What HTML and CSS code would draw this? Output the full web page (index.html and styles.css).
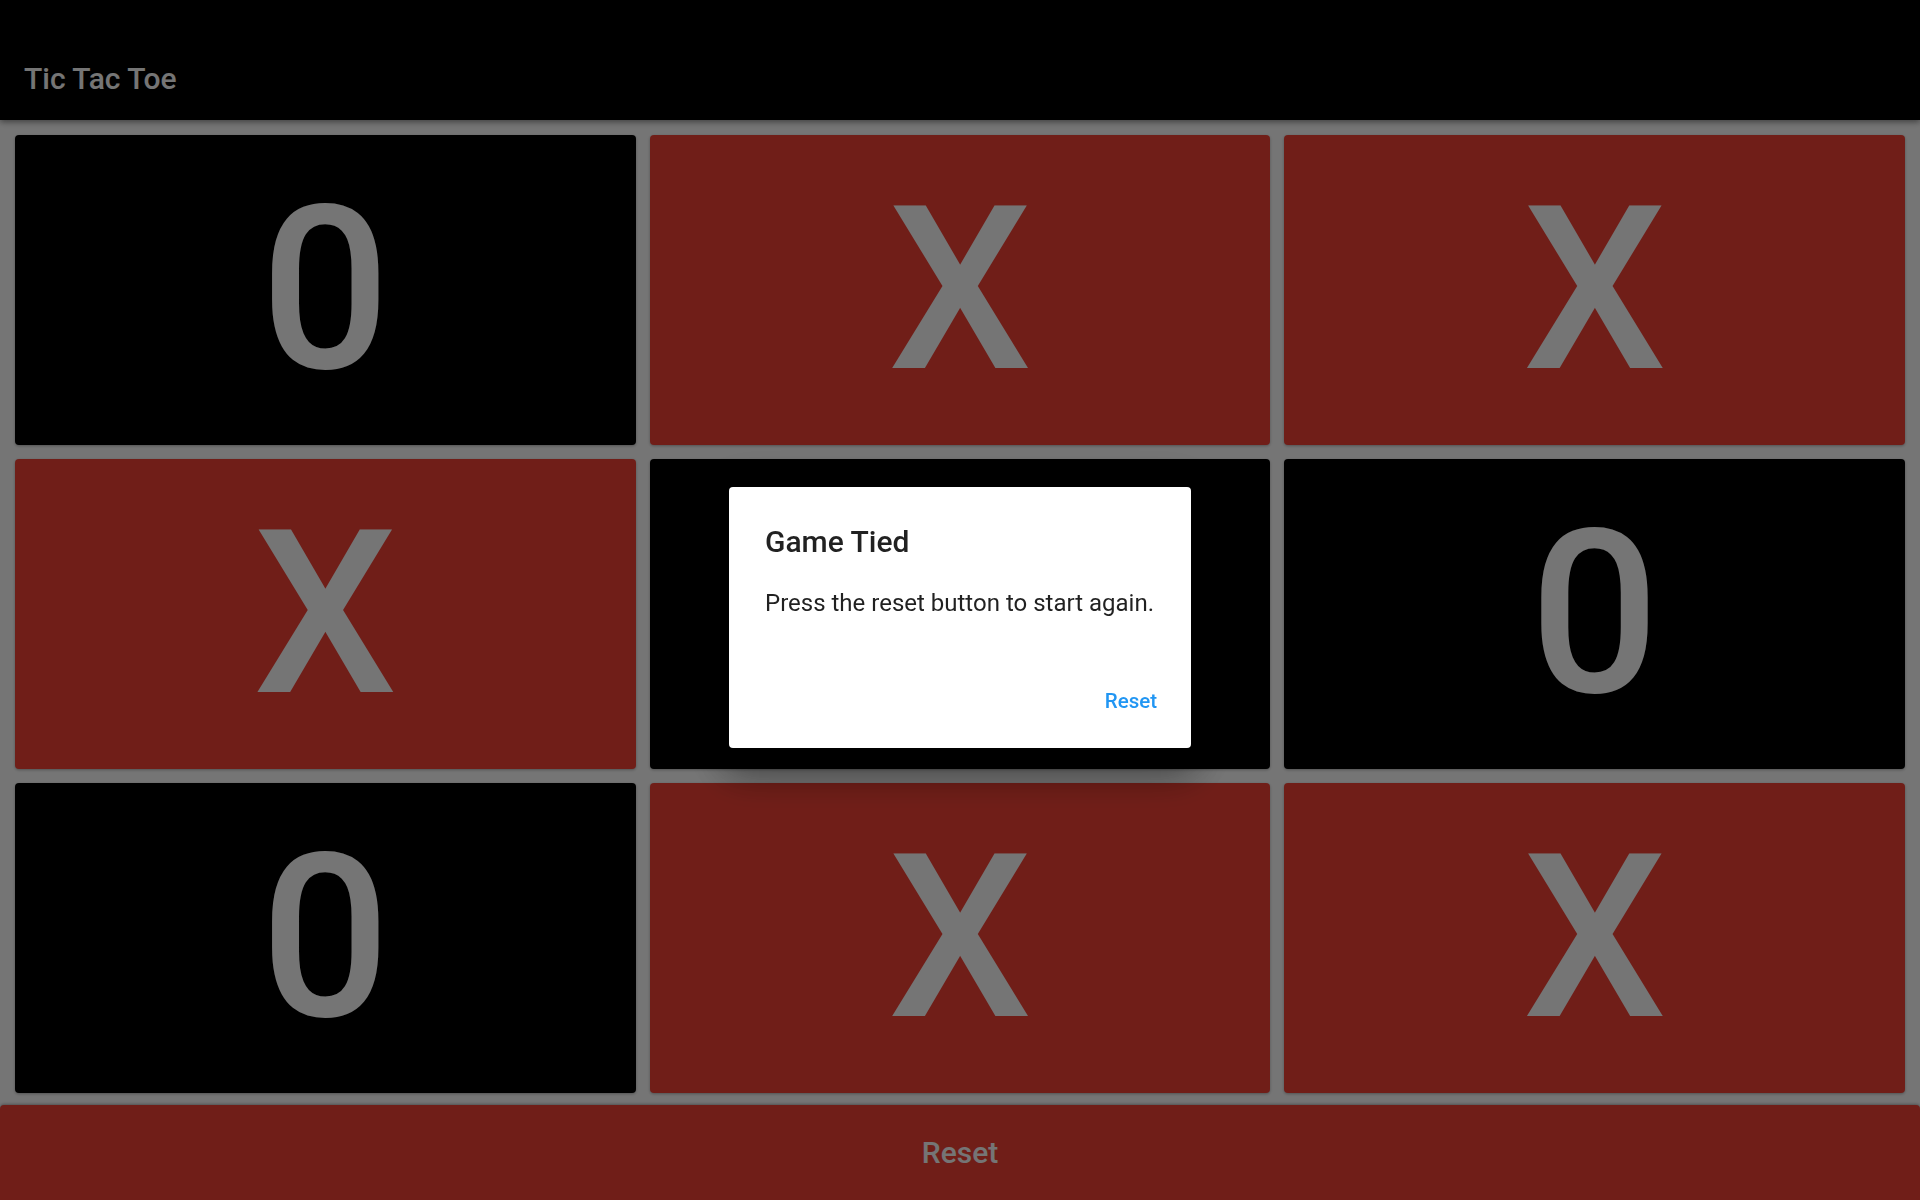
FILE: index.html
```html
<!DOCTYPE html>
<html lang="en">
<head>
<meta charset="utf-8">
<title>Tic Tac Toe</title>
<link rel="stylesheet" href="styles.css">
</head>
<body>
<div class="app">
  <header class="app-bar">
    <h1 class="app-title">Tic Tac Toe</h1>
  </header>
  <main class="board">
    <div class="cell cell-o">0</div>
    <div class="cell cell-x">X</div>
    <div class="cell cell-x">X</div>
    <div class="cell cell-x">X</div>
    <div class="cell cell-o"></div>
    <div class="cell cell-o">0</div>
    <div class="cell cell-o">0</div>
    <div class="cell cell-x">X</div>
    <div class="cell cell-x">X</div>
  </main>
  <button class="reset-bar">Reset</button>
</div>
<div class="barrier">
  <div class="dialog" role="dialog">
    <h2 class="dialog-title">Game Tied</h2>
    <p class="dialog-content">Press the reset button to start again.</p>
    <div class="dialog-actions">
      <button class="text-button">Reset</button>
    </div>
  </div>
</div>
</body>
</html>
```
FILE: styles.css
```css
* { box-sizing: border-box; }
html, body {
  margin: 0;
  padding: 0;
  height: 100%;
}
body {
  font-family: Roboto, "Noto Sans", "Liberation Sans", sans-serif;
  background: #ffffff;
  overflow: hidden;
}
.app {
  display: flex;
  flex-direction: column;
  height: 100vh;
}
.app-bar {
  height: 120px;
  flex: 0 0 120px;
  background: #000;
  padding: 61px 24px 0;
  box-shadow: 0 2px 6px rgba(0,0,0,0.45);
  position: relative;
  z-index: 1;
}
.app-title {
  margin: 0;
  font-size: 30px;
  font-weight: 500;
  color: #fff;
  line-height: normal;
}
.board {
  flex: 1 1 auto;
  display: grid;
  grid-template-columns: repeat(3, 1fr);
  grid-template-rows: repeat(3, 1fr);
  gap: 14px;
  padding: 15px 15px 12px;
  min-height: 0;
}
.cell {
  border-radius: 4px;
  display: flex;
  align-items: center;
  justify-content: center;
  color: #fff;
  font-size: 228px;
  font-weight: 500;
  line-height: normal;
  box-shadow: 0 1px 3px rgba(0,0,0,0.3);
}
.cell-o { background: #000; }
.cell-x { background: #f44336; }
.reset-bar {
  flex: 0 0 95px;
  height: 95px;
  border: none;
  background: #f44336;
  color: #fff;
  font-family: inherit;
  font-size: 30px;
  font-weight: 500;
  border-radius: 4px 4px 0 0;
  box-shadow: 0 -1px 3px rgba(0,0,0,0.3);
}
.barrier {
  position: fixed;
  inset: 0;
  background: rgba(0,0,0,0.54);
  display: flex;
  align-items: center;
  justify-content: center;
  padding-top: 35px;
  z-index: 10;
}
.dialog {
  width: 462px;
  height: 261px;
  background: #fff;
  border-radius: 4px;
  box-shadow: 0 24px 38px 3px rgba(0,0,0,0.3), 0 9px 46px 8px rgba(0,0,0,0.25), 0 11px 15px -7px rgba(0,0,0,0.4);
  display: flex;
  flex-direction: column;
}
.dialog-title {
  margin: 0;
  padding: 37px 36px 0;
  font-size: 30px;
  font-weight: 500;
  color: rgba(0,0,0,0.87);
  line-height: normal;
}
.dialog-content {
  margin: 0;
  padding: 30px 36px 0;
  font-size: 24px;
  font-weight: 400;
  color: rgba(0,0,0,0.87);
  line-height: normal;
}
.dialog-actions {
  margin-top: auto;
  display: flex;
  justify-content: flex-end;
  padding: 0 22px 21px;
}
.text-button {
  height: 52px;
  padding: 0 12px;
  border: none;
  background: transparent;
  color: #2196f3;
  font-family: inherit;
  font-size: 20.5px;
  font-weight: 500;
  border-radius: 4px;
}
```
